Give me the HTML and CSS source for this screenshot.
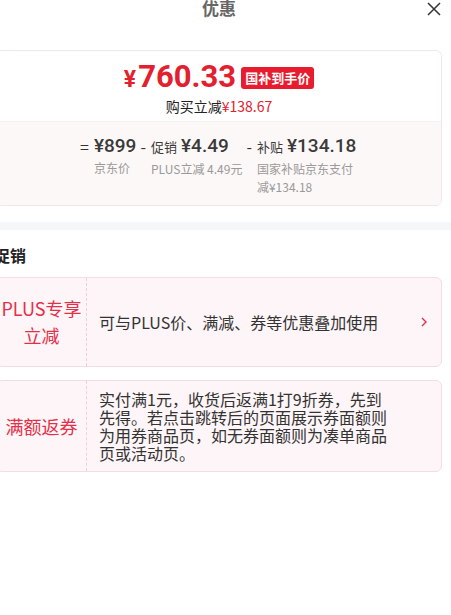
FILE: index.html
```html
<!DOCTYPE html>
<html lang="zh-CN">
<head>
    <meta charset="UTF-8">
    <meta name="viewport" content="width=device-width, initial-scale=1.0">
    <title>优惠</title>
    <link rel="stylesheet" href="styles.css">
</head>
<body>
    <div class="panel">
        <div class="header">
            <span></span>
            <h1 class="title">优惠</h1>
            <button class="close" type="button" aria-label="关闭">
                <svg width="14" height="14" viewBox="0 0 14 14">
                    <path d="M1 1L13 13M13 1L1 13" stroke="#333" stroke-width="1.5" fill="none"/>
                </svg>
            </button>
        </div>

        <div class="price-card">
            <div class="price-top">
                <div class="price-line">
                    <span class="price"><span class="yen">¥</span>760.33</span>
                    <span class="badge">国补到手价</span>
                </div>
                <div class="saving">购买立减<span class="red">¥138.67</span></div>
            </div>
            <div class="price-detail">
                <div class="item">
                    <span class="op">=</span>
                    <div class="item-body">
                        <div class="val">¥899</div>
                        <div class="lbl">京东价</div>
                    </div>
                </div>
                <div class="item">
                    <span class="op">-</span>
                    <div class="item-body">
                        <div class="val"><span class="val-tag">促销</span>¥4.49</div>
                        <div class="lbl">PLUS立减 4.49元</div>
                    </div>
                </div>
                <div class="item">
                    <span class="op">-</span>
                    <div class="item-body narrow">
                        <div class="val"><span class="val-tag">补贴</span>¥134.18</div>
                        <div class="lbl">国家补贴京东支付减¥134.18</div>
                    </div>
                </div>
            </div>
        </div>
    </div>

    <div class="band"></div>

    <div class="panel">
        <h2 class="section-title">促销</h2>

        <div class="promo">
            <div class="promo-tag">PLUS专享<br>立减</div>
            <div class="promo-desc">可与PLUS价、满减、券等优惠叠加使用</div>
            <div class="promo-more">
                <svg width="6" height="10" viewBox="0 0 6 10">
                    <path d="M1 1L5 5L1 9" stroke="#e3304a" stroke-width="1.4" fill="none"/>
                </svg>
            </div>
        </div>

        <div class="promo">
            <div class="promo-tag">满额返券</div>
            <div class="promo-desc multi">实付满1元，收货后返满1打9折券，先到先得。若点击跳转后的页面展示券面额则为用券商品页，如无券面额则为凑单商品页或活动页。</div>
            <div class="promo-more"></div>
        </div>
    </div>
</body>
</html>
```

FILE: styles.css
```css
body {
    margin: 0;
    padding: 0;
    width: 451px;
    overflow: hidden;
    background-color: #fff;
    color: #333;
    font-family: "Noto Sans CJK SC", "Noto Sans", sans-serif;
}

.panel {
    width: 446px;
    margin-left: -4px;
}

/* cabecera */
.header {
    display: grid;
    grid-template-columns: 1fr auto 1fr;
    align-items: center;
    height: 18px;
    margin-top: -1px;
}

.title {
    margin: 0;
    font-size: 17px;
    line-height: 18px;
    font-weight: bold;
    color: #666;
}

.close {
    justify-self: end;
    margin-right: 1px;
    margin-top: 2px;
    padding: 0;
    border: none;
    background: none;
    width: 14px;
    height: 14px;
    display: flex;
}

/* tarjeta de precio */
.price-card {
    margin-top: 33px;
    border: 1px solid #f2e6e8;
    border-radius: 6px;
    overflow: hidden;
}

.price-top {
    padding: 10px 0 5px;
    text-align: center;
    border-bottom: 1px solid #f8eeee;
}

.price-line {
    display: flex;
    justify-content: center;
    align-items: center;
    height: 34px;
}

.price {
    font-family: Roboto, "Noto Sans", sans-serif;
    font-size: 31px;
    font-weight: bold;
    color: #e4202e;
    line-height: 34px;
}

.yen {
    font-size: 23px;
    margin-right: 2px;
}

.badge {
    margin-left: 5px;
    padding: 0 4px;
    height: 22px;
    line-height: 22px;
    border-radius: 3px;
    background-color: #e81c2e;
    color: #fff;
    font-size: 13px;
    font-weight: bold;
}

.saving {
    font-size: 14px;
    line-height: 20px;
    margin-top: 1px;
    color: #222;
}

.red {
    color: #e4202e;
}

.price-detail {
    display: flex;
    justify-content: center;
    gap: 4px;
    padding: 12px 0 9px 0;
    margin-left: -3px;
    background-color: #fdf8f8;
}

.item {
    display: flex;
    align-items: flex-start;
}

.op {
    font-size: 16px;
    line-height: 24px;
    color: #333;
    margin-right: 5px;
}

.val {
    font-family: Roboto, "Noto Sans", sans-serif;
    font-size: 19px;
    line-height: 24px;
    font-weight: 500;
    color: #3a3a3a;
    white-space: nowrap;
}

.val-tag {
    font-family: "Noto Sans CJK SC", sans-serif;
    font-size: 13px;
    font-weight: normal;
    margin-right: 4px;
}

.lbl {
    margin-top: 1px;
    font-size: 12px;
    line-height: 18px;
    color: #999;
}

.narrow {
    max-width: 98px;
}

/* separador */
.band {
    height: 8px;
    margin-top: 16px;
    background-color: #f5f7fb;
}

/* promociones */
.section-title {
    margin: 14px 0 11px -2px;
    font-size: 16px;
    line-height: 22px;
    font-weight: bold;
    color: #222;
}

.promo {
    display: flex;
    margin-bottom: 13px;
    border: 1px solid #f4dde2;
    border-radius: 6px;
    background-color: #fdf5f7;
}

.promo-tag {
    width: 89px;
    flex-shrink: 0;
    display: flex;
    align-items: center;
    justify-content: center;
    padding: 17px 0;
    border-right: 1px dashed #ecd2d8;
    text-align: center;
    font-size: 18px;
    line-height: 27px;
    color: #e3304a;
}

.promo-desc {
    flex: 1;
    display: flex;
    align-items: center;
    padding: 0 0 0 12px;
    font-size: 16px;
    line-height: 18px;
    color: #333;
}

.promo-desc.multi {
    padding-top: 9px;
    padding-bottom: 9px;
}

.promo-more {
    width: 50px;
    flex-shrink: 0;
    display: flex;
    align-items: center;
    justify-content: flex-end;
    padding-right: 14px;
    box-sizing: border-box;
}
```
